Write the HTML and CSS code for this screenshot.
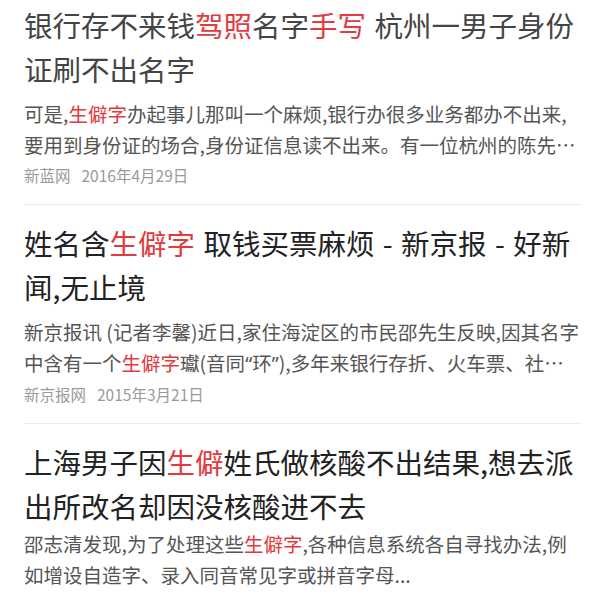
FILE: index.html
```html
<!DOCTYPE html>
<html lang="zh-CN">
<head>
<meta charset="utf-8">
<title>搜索结果</title>
<link rel="stylesheet" href="styles.css">
</head>
<body>
<div class="list">
  <div class="item item-first">
    <div class="title visited">银行存不来钱<em>驾照</em>名字<em>手写</em> 杭州一男子身份<br>证刷不出名字</div>
    <div class="desc">可是,<em>生僻字</em>办起事儿那叫一个麻烦,银行办很多业务都办不出来,<br>要用到身份证的场合,身份证信息读不出来。有一位杭州的陈先…</div>
    <div class="source"><span class="site">新蓝网</span><span class="date">2016年4月29日</span></div>
  </div>
  <div class="item">
    <div class="title">姓名含<em>生僻字</em> 取钱买票麻烦 - 新京报 - 好新<br>闻,无止境</div>
    <div class="desc">新京报讯 (记者李馨)近日,家住海淀区的市民邵先生反映,因其名字<br>中含有一个<em>生僻字</em>瓛(音同<span class="q">“</span>环<span class="q">”</span>),多年来银行存折、火车票、社…</div>
    <div class="source"><span class="site">新京报网</span><span class="date">2015年3月21日</span></div>
  </div>
  <div class="item item-last">
    <div class="title">上海男子因<em>生僻</em>姓氏做核酸不出结果,想去派<br>出所改名却因没核酸进不去</div>
    <div class="desc">邵志清发现,为了处理这些<em>生僻字</em>,各种信息系统各自寻找办法,例<br>如增设自造字、录入同音常见字或拼音字母...</div>
  </div>
</div>
</body>
</html>
```
FILE: styles.css
```css
html, body {
  margin: 0;
  padding: 0;
  background: #ffffff;
}
body {
  font-family: "Noto Sans CJK SC", "Noto Sans", sans-serif;
  width: 600px;
  height: 595px;
  overflow: hidden;
}
.list {
  padding: 0 18px 0 24px;
}
.item {
  padding: 16px 0 17px;
  border-bottom: 1px solid #ececec;
}
.item-first {
  padding-top: 3px;
}
.title {
  font-size: 28.5px;
  line-height: 44px;
  color: #222222;
  white-space: nowrap;
  word-spacing: 2px;
  margin-bottom: 7px;
}
.item-last .title {
  margin-bottom: 0;
}
.title.visited {
  color: #444444;
}
em {
  font-style: normal;
  color: #e23a3f;
}
.desc {
  font-size: 19.5px;
  line-height: 31px;
  color: #555555;
  white-space: nowrap;
}
.q {
  font-family: "Noto Sans", "Liberation Sans", sans-serif;
}
.source {
  margin-top: 3px;
  font-size: 15.5px;
  line-height: 24px;
  color: #9a9a9a;
  display: flex;
  gap: 11px;
}
```
